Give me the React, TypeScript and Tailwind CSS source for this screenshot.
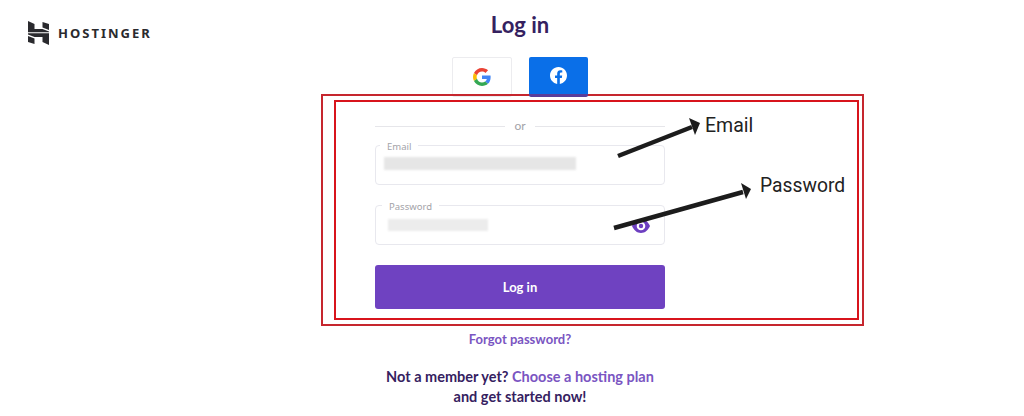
export default function App() {
  return (
    <div className="relative flex h-[416px] w-[1024px] overflow-hidden bg-white font-['Lato',sans-serif]">
      <div className="w-[321px] shrink-0 pl-[28px] pt-[21px]">
        <div className="flex items-center gap-[9px]">
          <svg width="21" height="24" viewBox="0 0 21 24" fill="#2a2a2e">
            <path d="M0 0 L6.500 3 V8 H14.500 L21 10.500 V11.300 H0 Z" />
            <path d="M14.500 1 L21 3 V9 L14.500 6.500 Z" />
            <path d="M21 24 L14.500 21 V16 H6.500 L0 13.500 V12.300 H21 Z" />
            <path d="M6.500 23 L0 21 V15 L6.500 17.500 Z" />
          </svg>
          <span className="font-['Noto_Sans',sans-serif] text-[13px] font-bold leading-none tracking-[2px] text-[#2a2a2e]">HOSTINGER</span>
        </div>
      </div>
      <main className="flex w-[543px] shrink-0 flex-col">
        <div className="ml-[54px] w-[290px]">
          <h1 className="pt-[13px] text-center text-[22px] font-bold leading-[24px] text-[#35215f]">Log in</h1>
          <div className="mt-[20px] flex justify-center gap-[17px] pr-[1px]">
            <button className="flex h-[40px] w-[60px] items-center justify-center rounded-[2px] border border-[#ececef] bg-white">
              <svg width="18" height="18" viewBox="0 0 48 48">
                <path fill="#EA4335" d="M24 9.500c3.500 0 6.700 1.200 9.200 3.600l6.900-6.900C35.900 2.400 30.500 0 24 0 14.600 0 6.500 5.400 2.600 13.200l8 6.200C12.500 13.700 17.800 9.500 24 9.500z" />
                <path fill="#4285F4" d="M47 24.500c0-1.600-.1-3.100-.4-4.500H24v9h12.900c-.6 3-2.200 5.500-4.800 7.200l7.700 6C44.400 38.400 47 32 47 24.500z" />
                <path fill="#FBBC05" d="M10.500 28.600c-.5-1.400-.8-3-.8-4.600s.3-3.200.8-4.600l-8-6.200C.9 16.500 0 20.100 0 24s.9 7.500 2.600 10.800l7.900-6.200z" />
                <path fill="#34A853" d="M24 48c6.500 0 11.900-2.100 15.900-5.800l-7.700-6c-2.200 1.400-4.900 2.300-8.200 2.300-6.200 0-11.500-4.200-13.400-9.900l-8 6.200C6.500 42.600 14.600 48 24 48z" />
              </svg>
            </button>
            <button className="relative z-10 flex h-[40px] w-[59px] items-center justify-center rounded-[2px] border-b-[3px] border-[#5a3d9a] bg-[#0a6fe8]">
              <svg width="17" height="17" viewBox="0 0 24 24" fill="#fff">
                <path d="M24 12.070C24 5.400 18.630 0 12 0S0 5.400 0 12.070c0 6.030 4.390 11.030 10.130 11.930v-8.440H7.080v-3.490h3.050V9.410c0-3.020 1.790-4.690 4.530-4.690 1.310 0 2.690.24 2.690.24v2.970h-1.510c-1.490 0-1.960.93-1.960 1.880v2.260h3.330l-.53 3.490h-2.800V24C19.610 23.100 24 18.100 24 12.070z" />
              </svg>
            </button>
          </div>
        </div>
        <section className="-mt-[3px] h-[232px] w-[543px] border-2 border-[#c6262e] px-[11px] pt-[4px]">
          <div className="h-[220px] w-[525px] border-2 border-[#d8141c] pl-[39px] pt-[15px]">
            <div className="w-[290px]">
              <div className="flex items-center gap-[9px]">
                <div className="h-px flex-1 bg-[#e6e6ea]" />
                <span className="text-[12px] leading-[18px] text-[#a3a3a8]">or</span>
                <div className="h-px flex-1 bg-[#e6e6ea]" />
              </div>
              <div className="relative mt-[10px] h-[40px] rounded-[4px] border border-[#e8e8ee] pl-[8px] pt-[11px]">
                <span className="absolute -top-[6px] left-[4px] bg-white px-[7px] font-['Noto_Sans',sans-serif] text-[9.500px] leading-[14px] text-[#a3a3a8]">Email</span>
                <div className="h-[13px] w-[192px] bg-[#e6e6e6] blur-[1px]" />
              </div>
              <div className="relative mt-[20px] flex h-[40px] items-start justify-between rounded-[4px] border border-[#e8e8ee] pl-[12px] pr-[14px] pt-[13px]">
                <span className="absolute -top-[6px] left-[6px] bg-white px-[7px] font-['Noto_Sans',sans-serif] text-[9.500px] leading-[14px] text-[#a3a3a8]">Password</span>
                <div className="h-[12px] w-[100px] bg-[#ececec] blur-[1px]" />
                <svg width="18" height="14" viewBox="0 0 18 14">
                  <path fillRule="evenodd" fill="#6d3fc0" d="M9 0C5 0 1.800 2.800 0 7c1.800 4.200 5 7 9 7s7.200-2.800 9-7c-1.800-4.200-5-7-9-7zm0 2.700a4.300 4.300 0 1 1 0 8.600 4.300 4.300 0 0 1 0-8.600z" />
                  <circle cx="9" cy="7" r="2.200" fill="#6d3fc0" />
                </svg>
              </div>
              <button className="mt-[20px] h-[44px] w-full rounded-[3px] bg-[#6f42c1] pt-[1px] text-[13px] font-bold text-white">Log in</button>
            </div>
          </div>
        </section>
        <div className="ml-[54px] w-[290px] text-center">
          <a className="mt-[4px] block text-[13px] font-bold leading-[18px] text-[#7a55c2]">Forgot password?</a>
          <p className="-mx-4 mt-[19px] text-[14.500px] font-bold leading-[20px] text-[#35215f]">
            Not a member yet? <a className="text-[#7a55c2]">Choose a hosting plan</a>
            <br />
            and get started now!
          </p>
        </div>
      </main>
      <svg className="absolute left-0 top-0 z-20" width="1024" height="416" viewBox="0 0 1024 416" fill="#1c1c1c" stroke="none">
        <path d="M618 156 L692 127" stroke="#1c1c1c" strokeWidth="4.500" />
        <path d="M700 123 L689 118 L695 135 Z" />
        <path d="M614 228 L743 192" stroke="#1c1c1c" strokeWidth="4.500" />
        <path d="M751 189 L741 183 L746 199 Z" />
      </svg>
      <span className="absolute left-[705px] top-[114px] font-['Roboto',sans-serif] text-[19.500px] leading-[24px] text-[#222]">Email</span>
      <span className="absolute left-[760px] top-[174px] font-['Roboto',sans-serif] text-[19.300px] leading-[24px] text-[#222]">Password</span>
    </div>
  );
}
